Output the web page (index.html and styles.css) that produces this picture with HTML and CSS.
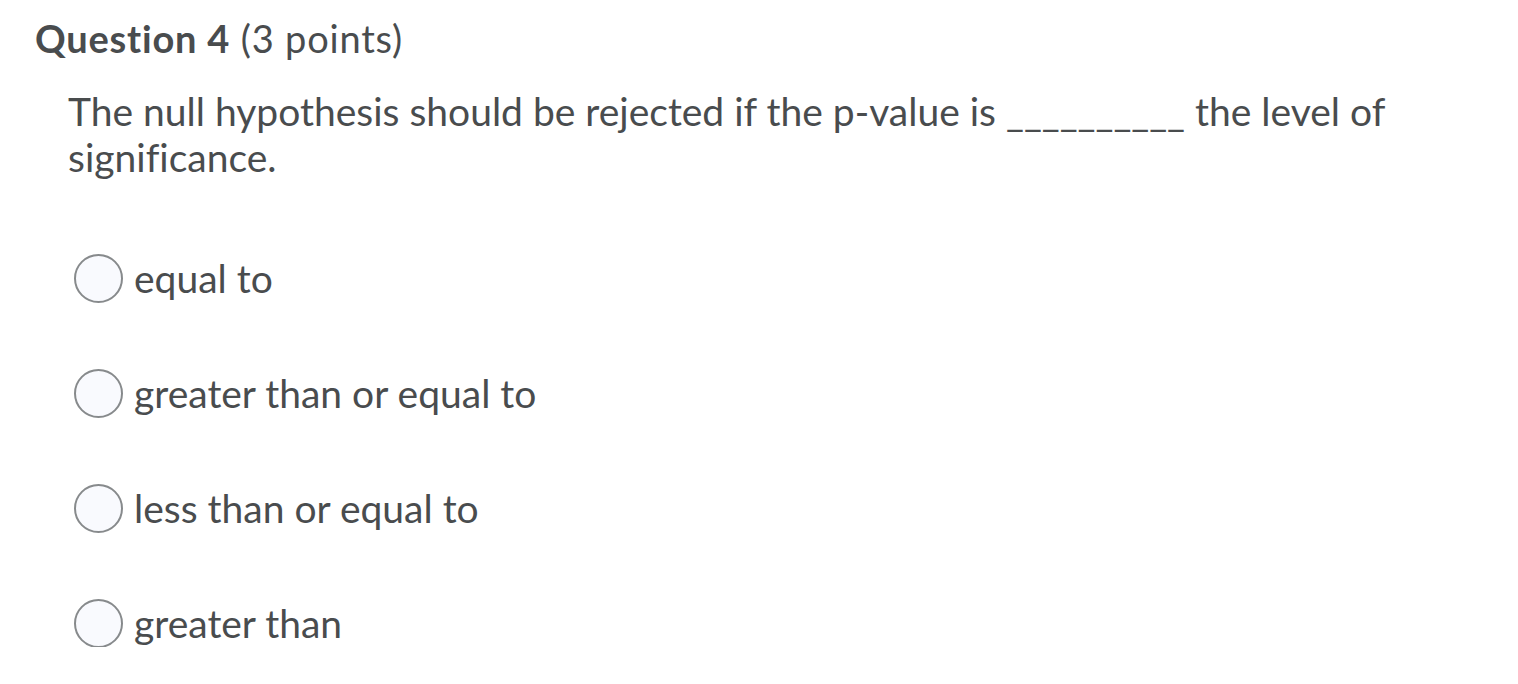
FILE: index.html
```html
<!DOCTYPE html>
<html>
<head>
<meta charset="utf-8">
<link rel="stylesheet" href="styles.css">
</head>
<body>
<div class="question">
  <h2 class="title"><span class="title-strong">Question 4</span> (3 points)</h2>
  <div class="body">
    <p class="prompt">The null hypothesis should be rejected if the p-value is __________ the level of significance.</p>
    <div class="options">
      <label class="option"><span class="radio"></span><span class="label">equal to</span></label>
      <label class="option"><span class="radio"></span><span class="label">greater than or equal to</span></label>
      <label class="option"><span class="radio"></span><span class="label">less than or equal to</span></label>
      <label class="option"><span class="radio"></span><span class="label">greater than</span></label>
    </div>
  </div>
</div>
</body>
</html>
```
FILE: styles.css
```css
html, body {
  margin: 0;
  padding: 0;
  background: #ffffff;
}
body {
  font-family: Lato, "Liberation Sans", sans-serif;
  color: #494c4e;
  font-variant-ligatures: none;
}
.question {
  padding: 14px 0 0 35px;
}
.title {
  margin: 0;
  font-size: 38px;
  font-weight: 400;
  line-height: 48px;
  letter-spacing: 0.8px;
}
.title-strong {
  font-weight: 700;
}
.body {
  padding-left: 33px;
}
.prompt {
  margin: 26px 0 0 0;
  font-size: 39px;
  line-height: 46px;
  width: 1360px;
}
.options {
  display: flex;
  flex-direction: column;
  gap: 67px;
  margin-top: 74px;
}
.option {
  display: flex;
  align-items: center;
  gap: 11px;
  height: 48px;
  font-size: 39px;
}
.radio {
  width: 45px;
  height: 45px;
  border: 2px solid #878a8c;
  border-radius: 50%;
  background: #f9fafe;
  margin-left: 6px;
  flex-shrink: 0;
}
```
